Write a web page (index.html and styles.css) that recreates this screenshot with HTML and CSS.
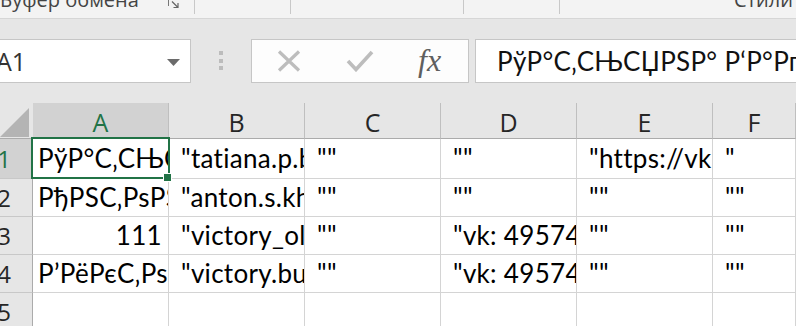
FILE: index.html
```html
<!DOCTYPE html>
<html lang="ru">
<head>
    <meta charset="UTF-8">
    <title>Книга1 - Excel</title>
    <link rel="stylesheet" href="styles.css">
</head>
<body>
    <div class="ribbon">
        <div class="group group-clip">
            <span class="group-label">Буфер обмена</span>
            <svg class="launcher" width="14" height="10" viewBox="0 0 14 10">
                <path d="M1.5 0 V6" stroke="#777" stroke-width="1" fill="none"/>
                <path d="M5 1.5 L10.5 7 M6.5 7.5 H11 V3" stroke="#666" stroke-width="1.2" fill="none"/>
            </svg>
        </div>
        <div class="group group-font"></div>
        <div class="group group-align"></div>
        <div class="group group-num"></div>
        <div class="group group-styles">
            <span class="group-label">Стили</span>
        </div>
    </div>

    <div class="formula-row">
        <div class="name-box">
            <span class="name-ref">A1</span>
            <svg class="caret" width="13" height="7" viewBox="0 0 13 7"><path d="M0 0 H13 L6.5 7 Z" fill="#6b6b6b"/></svg>
        </div>
        <div class="grip"><i></i><i></i><i></i></div>
        <div class="fx-buttons">
            <svg class="btn-cancel" width="24" height="22" viewBox="0 0 24 22">
                <path d="M2 1.5 L22 20.5 M22 1.5 L2 20.5" stroke="#bdbdbd" stroke-width="3.2" fill="none"/>
            </svg>
            <svg class="btn-enter" width="28" height="22" viewBox="0 0 28 22">
                <path d="M2 11 L10 19.5 L26 2" stroke="#bdbdbd" stroke-width="3.6" fill="none"/>
            </svg>
            <span class="btn-fx">fx</span>
        </div>
        <div class="formula-input">РўР°С‚СЊСЏРЅР° Р‘Р°РґСЂРѕРІР°</div>
    </div>

    <div class="sheet">
        <div class="corner">
            <svg width="30" height="30" viewBox="0 0 30 30"><path d="M0 30 L29 1 V30 Z" fill="#b4b4b4"/></svg>
        </div>
        <div class="colhead active">A</div>
        <div class="colhead">B</div>
        <div class="colhead">C</div>
        <div class="colhead">D</div>
        <div class="colhead">E</div>
        <div class="colhead">F</div>

        <div class="rowhead active"><span>1</span></div>
        <div class="cell top selected">
            <span class="cell-text">РўР°С‚СЊСЏРЅР° Р‘Р°РґСЂРѕРІР°</span>
            <div class="sel-box"><div class="fill-handle"></div></div>
        </div>
        <div class="cell top"> "tatiana.p.badrova@mail.ru"</div>
        <div class="cell top"> ""</div>
        <div class="cell top"> ""</div>
        <div class="cell top"> "https://vk.com/id1234"</div>
        <div class="cell top"> "</div>

        <div class="rowhead"><span>2</span></div>
        <div class="cell">РђРЅС‚РѕРЅ РЎРѕРєРѕР»РѕРІ</div>
        <div class="cell"> "anton.s.khromov@mail.ru"</div>
        <div class="cell"> ""</div>
        <div class="cell"> ""</div>
        <div class="cell"> ""</div>
        <div class="cell"> ""</div>

        <div class="rowhead"><span>3</span></div>
        <div class="cell num">111</div>
        <div class="cell"> "victory_olga@mail.ru"</div>
        <div class="cell"> ""</div>
        <div class="cell"> "vk: 495741233"</div>
        <div class="cell"> ""</div>
        <div class="cell"> ""</div>

        <div class="rowhead"><span>4</span></div>
        <div class="cell">Р’РёРєС‚РѕСЂРёСЏ</div>
        <div class="cell"> "victory.bunina@mail.ru"</div>
        <div class="cell"> ""</div>
        <div class="cell"> "vk: 495741233"</div>
        <div class="cell"> ""</div>
        <div class="cell"> ""</div>

        <div class="rowhead"><span>5</span></div>
        <div class="cell"></div>
        <div class="cell"></div>
        <div class="cell"></div>
        <div class="cell"></div>
        <div class="cell"></div>
        <div class="cell"></div>
    </div>
</body>
</html>
```

FILE: styles.css
```css
* {
    margin: 0;
    padding: 0;
    box-sizing: border-box;
}

body {
    width: 796px;
    height: 326px;
    overflow: hidden;
    background: #e6e6e6;
    font-family: 'Open Sans', 'Noto Sans', sans-serif;
    color: #262626;
}

/* ribbon strip (only its lower edge is in view) */
.ribbon {
    display: flex;
    height: 19px;
    background: #f3f3f3;
    border-bottom: 1px solid #d6d6d6;
    overflow: hidden;
}

.group {
    display: flex;
    align-items: flex-start;
    height: 14px;
    border-right: 1px solid #c8c8c8;
}

.group-clip { width: 195px; }
.group-font { width: 96px; }
.group-align { width: 173px; }
.group-num { width: 96px; }

.group-styles {
    flex: 1;
    justify-content: flex-end;
    border-right: none;
    padding-right: 3px;
}

.group-label {
    font-size: 20px;
    line-height: 18px;
    margin-top: -9px;
    color: #444;
    white-space: nowrap;
}

.launcher {
    margin-left: auto;
    margin-right: 13px;
}

/* name box + formula bar */
.formula-row {
    display: flex;
    height: 44px;
    margin-top: 20px;
}

.name-box {
    display: flex;
    align-items: center;
    width: 191px;
    background: #fff;
    border: 1px solid #c6c6c6;
    border-left: none;
    overflow: hidden;
}

.name-ref {
    font-size: 25px;
    line-height: 42px;
    margin-left: -4px;
    color: #333;
}

.caret {
    margin-left: auto;
    margin-right: 10px;
    margin-top: 2px;
}

.grip {
    display: flex;
    flex-direction: column;
    gap: 3.5px;
    margin: 12px 28px 0;
    width: 4px;
}

.grip i {
    width: 4px;
    height: 4px;
    background: #bcbcbc;
}

.fx-buttons {
    display: flex;
    align-items: center;
    width: 218px;
    background: #fdfdfd;
    border: 1px solid #c6c6c6;
    padding-left: 25px;
}

.btn-enter { margin-left: 45px; margin-top: -1px; }

.btn-fx {
    margin-left: 44px;
    font-family: 'Liberation Serif', serif;
    font-style: italic;
    font-size: 32px;
    line-height: 42px;
    color: #5f5f5f;
    margin-top: -2px;
}

.formula-input {
    flex: 1;
    margin-left: 6px;
    background: #fff;
    border: 1px solid #c6c6c6;
    border-right: none;
    padding-left: 21px;
    font-family: 'Lato', 'Noto Sans', sans-serif;
    font-size: 26px;
    letter-spacing: 0.3px;
    line-height: 42px;
    color: #111;
    white-space: nowrap;
    overflow: hidden;
}

/* worksheet grid */
.sheet {
    display: grid;
    grid-template-columns: 33px repeat(5, 136px) 1fr;
    grid-template-rows: 36px 40px repeat(4, 38px);
    margin-top: 20px;
    background: #fff;
}

.corner {
    display: flex;
    align-items: flex-end;
    justify-content: flex-end;
    background: #e6e6e6;
    border-bottom: 1px solid #ababab;
    padding: 0 3px 1px 0;
}

.colhead {
    background: #e6e6e6;
    border-right: 1px solid #bfbfbf;
    border-bottom: 1px solid #ababab;
    text-align: center;
    font-size: 25px;
    line-height: 32px;
    padding-top: 3px;
    color: #262626;
}

.colhead.active {
    background: #d2d2d2;
    color: #217346;
}

.rowhead {
    background: #e6e6e6;
    border-right: 1px solid #ababab;
    border-bottom: 1px solid #c8c8c8;
    overflow: hidden;
    font-size: 24px;
    line-height: 37px;
}

.rowhead span {
    display: block;
    width: 56px;
    margin-left: -24px;
    text-align: center;
}

.rowhead.active {
    background: #d2d2d2;
    color: #217346;
    line-height: 39px;
}

.cell {
    border-right: 1px solid #d4d4d4;
    border-bottom: 1px solid #d4d4d4;
    padding: 0 5px;
    font-family: 'Lato', 'Noto Sans', sans-serif;
    font-size: 26px;
    letter-spacing: 0.3px;
    line-height: 37px;
    color: #000;
    white-space: pre;
    overflow: hidden;
}

.cell.top { line-height: 39px; }

.cell.num {
    text-align: right;
    padding-right: 6px;
}

.cell.selected {
    position: relative;
    overflow: visible;
    padding: 0;
    white-space: normal;
}

.cell-text {
    display: block;
    padding: 0 5px;
    white-space: pre;
    overflow: hidden;
}

.sel-box {
    position: absolute;
    top: -2px;
    left: -2px;
    right: -2px;
    bottom: -1px;
    border: 2px solid #217346;
}

.fill-handle {
    position: absolute;
    right: -4px;
    bottom: -5px;
    width: 9px;
    height: 9px;
    background: #217346;
    border: 1px solid #fff;
}
```
